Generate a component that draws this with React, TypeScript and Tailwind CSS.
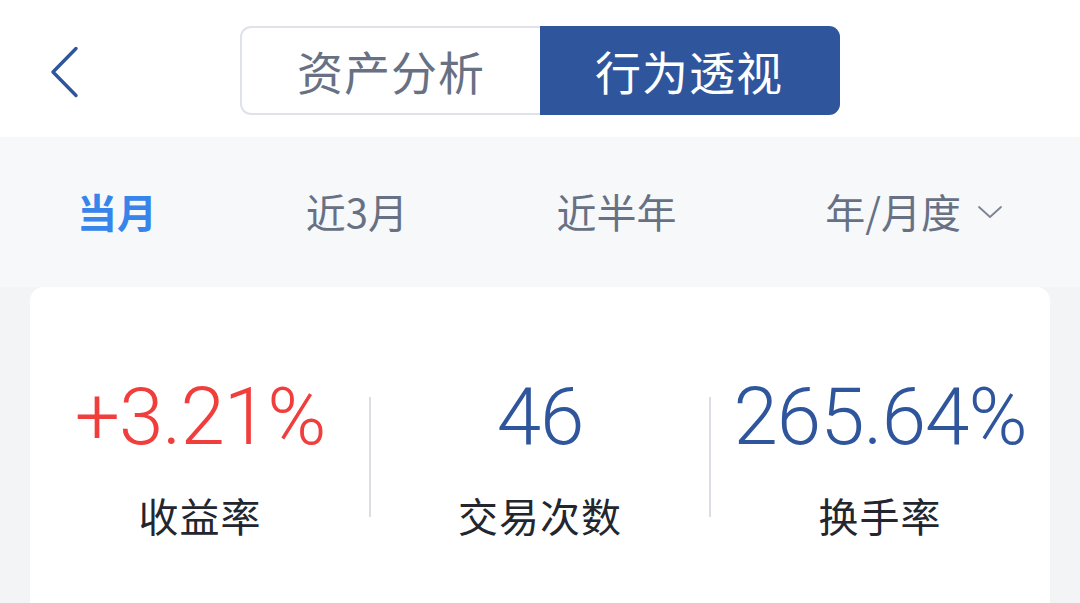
import React, { useState } from 'react';

const cjk = "font-['Noto_Sans_CJK_SC','Noto_Sans',sans-serif]";
const num = "font-['Roboto','Noto_Sans_CJK_SC',sans-serif]";

const periods = ['当月', '近3月', '近半年'];

const stats = [
  { value: '+3.21%', label: '收益率', color: 'text-[#f03e3c]' },
  { value: '46', label: '交易次数', color: 'text-[#2f569c]' },
  { value: '265.64%', label: '换手率', color: 'text-[#2f569c]' },
];

function App() {
  const [tab, setTab] = useState(1);
  const [period, setPeriod] = useState(0);

  return (
    <div className={`w-[1080px] h-[603px] overflow-hidden bg-[#f3f4f6] ${cjk}`}>
      {/* header */}
      <div className="relative h-[137px] bg-white flex items-center justify-center">
        <button className="absolute left-[46px] top-[44px] w-[36px] h-[56px] flex items-center justify-center">
          <svg width="30" height="52" viewBox="0 0 30 52" fill="none">
            <path d="M27 2.5 L4 26 L27 49.5" stroke="#2f569c" strokeWidth="3.4" strokeLinecap="round" strokeLinejoin="round" />
          </svg>
        </button>
        <div className="flex h-[89px] mt-[4px]">
          <button
            onClick={() => setTab(0)}
            className={`w-[300px] rounded-l-[11px] border-2 border-r-0 text-[46px] tracking-[1px] ${tab === 0 ? 'bg-[#2f569c] border-[#2f569c] text-white' : 'bg-white border-[#dfe2e8] text-[#687184]'}`}
          >
            资产分析
          </button>
          <button
            onClick={() => setTab(1)}
            className={`w-[300px] rounded-r-[11px] border-2 border-l-0 text-[46px] tracking-[1px] ${tab === 1 ? 'bg-[#2f569c] border-[#2f569c] text-white' : 'bg-white border-[#dfe2e8] text-[#687184]'}`}
          >
            行为透视
          </button>
        </div>
      </div>

      {/* period tabs */}
      <div className="h-[150px] bg-[#f6f8fa] flex items-center justify-between px-[77px] pb-[2px]">
        {periods.map((p, i) => (
          <button
            key={p}
            onClick={() => setPeriod(i)}
            className={`text-[40px] leading-none ${period === i ? 'text-[#3784ea] font-bold' : 'text-[#687184]'}`}
          >
            {p}
          </button>
        ))}
        <button className="flex items-center gap-[16px] text-[40px] leading-none text-[#687184]">
          年/月度
          <svg width="26" height="16" viewBox="0 0 26 16" fill="none" className="mt-[2px]">
            <path d="M2 3 L13 13 L24 3" stroke="#7c8394" strokeWidth="1.8" strokeLinecap="round" strokeLinejoin="round" />
          </svg>
        </button>
      </div>

      {/* stats card */}
      <div className="mx-[30px] h-[340px] bg-white rounded-t-[14px] pt-[90px]">
        <div className="grid grid-cols-3">
          {stats.map((s, i) => (
            <div key={s.label} className={`flex flex-col items-center ${i > 0 ? 'relative' : ''}`}>
              {i > 0 && <div className="absolute left-[-1px] top-[20px] w-[2px] h-[120px] bg-[#dcdde3]" />}
              <div className={`${num} ${s.color} font-light text-[80px] leading-[80px] h-[82px] tracking-[-1px]`}>{s.value}</div>
              <div className="mt-[36px] text-[40px] leading-none text-[#23262e] tracking-[1px]">{s.label}</div>
            </div>
          ))}
        </div>
      </div>
    </div>
  );
}

export default App;
